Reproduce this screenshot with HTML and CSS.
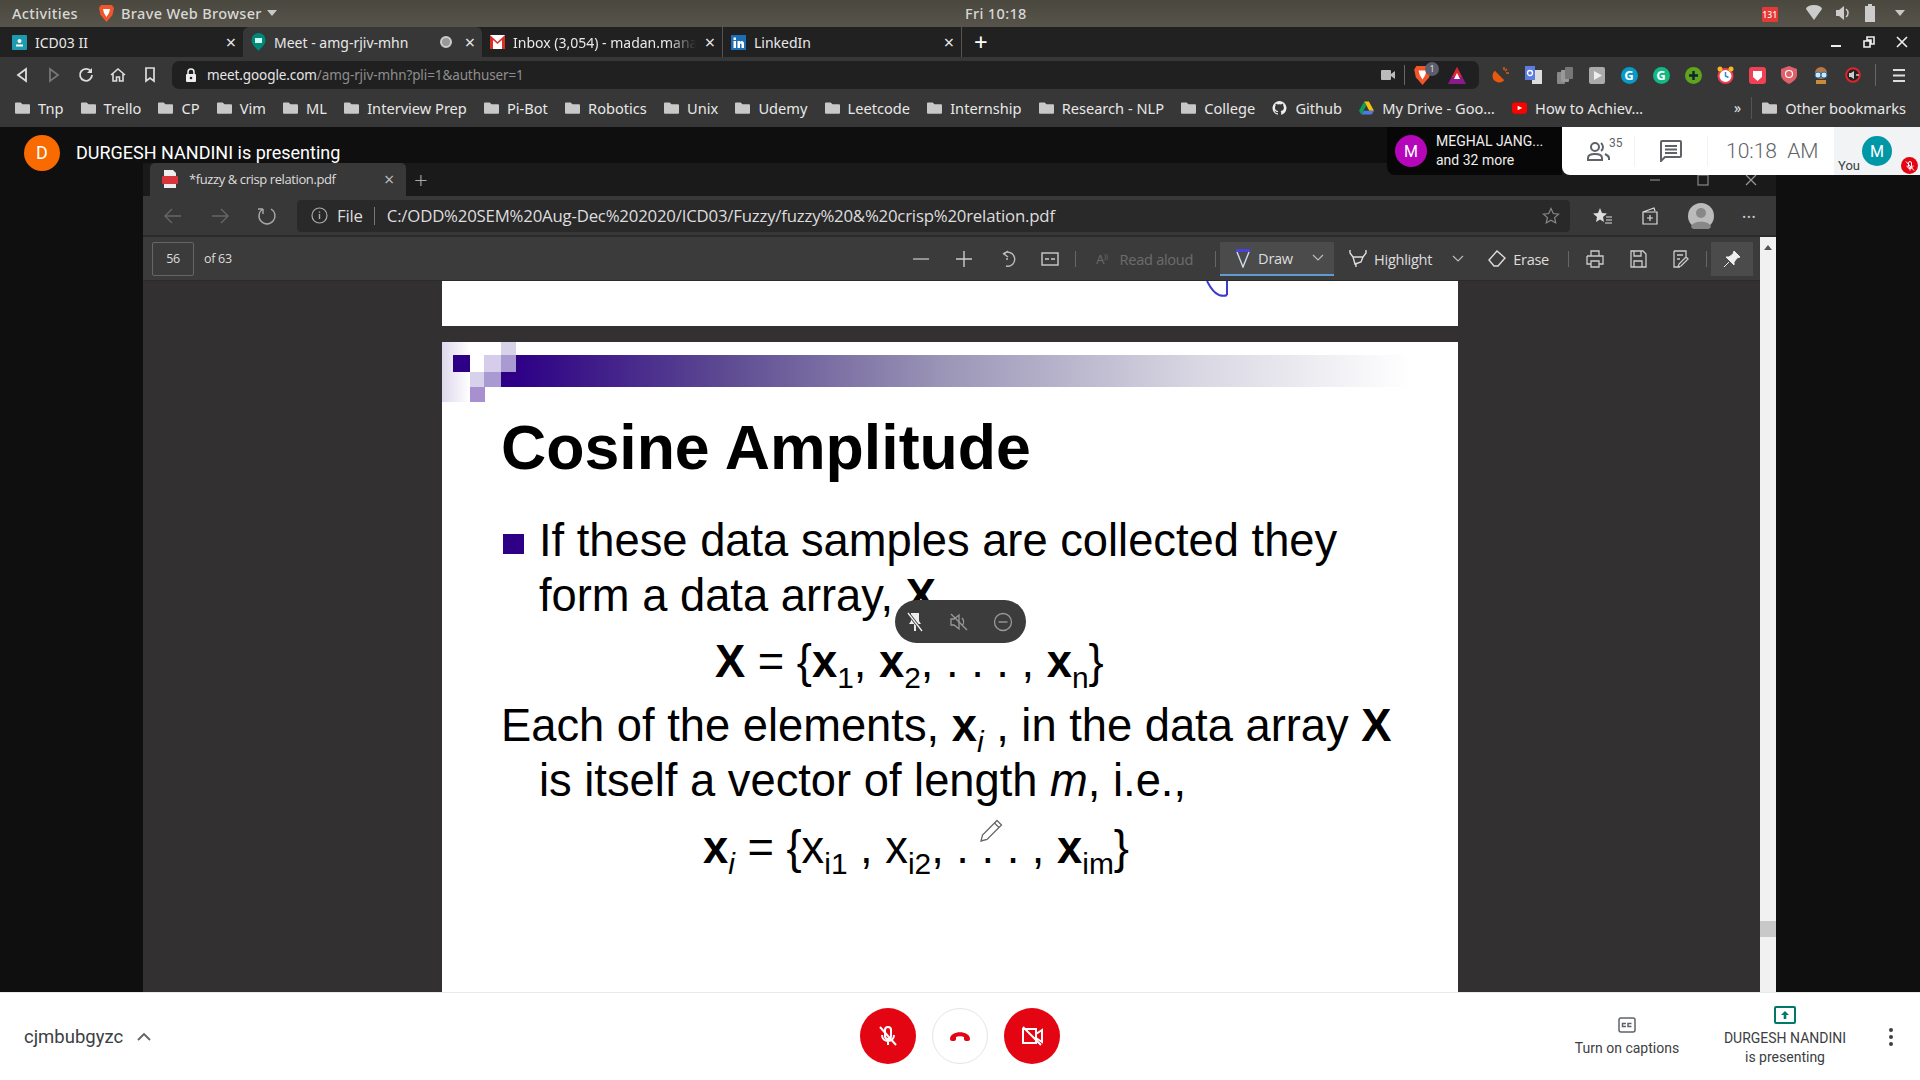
FILE: index.html
```html
<!DOCTYPE html>
<html lang="en">
<head>
  <meta charset="UTF-8">
  <title>Meet - amg-rjiv-mhn</title>
  <link rel="stylesheet" href="styles.css">
</head>
<body>

<svg class="defs" width="0" height="0">
  <symbol id="folder" viewBox="0 0 16 14"><path d="M0 2a1 1 0 0 1 1-1h5l2 2h7a1 1 0 0 1 1 1v8a1 1 0 0 1-1 1H1a1 1 0 0 1-1-1z" fill="#c8c8c8"/></symbol>
  <symbol id="mic-off" viewBox="0 0 24 24"><path d="M12 3a3 3 0 0 0-3 3v6a3 3 0 0 0 6 0V6a3 3 0 0 0-3-3zM6 11c0 4 3 6 6 6s6-2 6-6M12 17v4" fill="none" stroke="currentColor" stroke-width="2"/><path d="M4 3l16 18" stroke="currentColor" stroke-width="2"/></symbol>
</svg>

<!-- gnome top bar -->
<div class="topbar">
  <span class="activities">Activities</span>
  <svg class="brave-ic" width="15" height="18" viewBox="0 0 15 18"><path d="M2 1h11l2 3-1.500 7L7.500 18 1.500 11 0 4z" fill="#f1562b"/><path d="M4 5h7l-1 4-2.500 4L5 9z" fill="#fff"/></svg>
  <span class="app-name">Brave Web Browser</span>
  <span class="caret"></span>
  <span class="clock">Fri 10:18</span>
  <div class="tray">
    <span class="badge131">131</span>
    <svg width="16" height="16" viewBox="0 0 16 16"><path d="M0 4a8 4 0 0 1 16 0l-8 11z" fill="#ccc"/></svg>
    <svg width="14" height="16" viewBox="0 0 14 16"><path d="M0 5h3l5-4v14l-5-4H0z" fill="#ccc"/><path d="M10 4a5 5 0 0 1 0 8" fill="none" stroke="#ccc" stroke-width="1.500"/></svg>
    <svg width="12" height="18" viewBox="0 0 12 18"><path d="M1 2h3V0h4v2h3v16H1z" fill="#ccc"/></svg>
    <span class="caret"></span>
  </div>
</div>

<!-- browser tabs -->
<div class="tabstrip">
  <div class="tab">
    <svg width="15" height="15" viewBox="0 0 15 15"><rect width="15" height="15" rx="1" fill="#1e9ab0"/><circle cx="7.500" cy="6" r="2" fill="#fff"/><rect x="4" y="9.500" width="7" height="2" fill="#fff"/></svg>
    <span class="tab-title">ICD03 II</span><span class="tab-x">×</span>
  </div>
  <div class="tab active">
    <svg width="15" height="18" viewBox="0 0 15 18"><path d="M7.500 0a7 7 0 0 1 7 7c0 5-5 8-7 11-2-3-7-6-7-11a7 7 0 0 1 7-7z" fill="#00897b"/><rect x="4" y="5" width="7" height="5" fill="#cfe"/></svg>
    <span class="tab-title">Meet - amg-rjiv-mhn</span><span class="rec-dot"></span><span class="tab-x">×</span>
  </div>
  <div class="tab">
    <svg width="15" height="14" viewBox="0 0 15 14"><rect width="15" height="14" fill="#fff"/><path d="M0 0l7.500 7L15 0v14h-3V5L7.500 9 3 5v9H0z" fill="#d93025"/></svg>
    <span class="tab-title fade">Inbox (3,054) - madan.manas</span><span class="tab-x">×</span>
  </div>
  <div class="tab tab-sep">
    <svg width="15" height="15" viewBox="0 0 15 15"><rect width="15" height="15" fill="#1a6fb5"/><rect x="2.500" y="6" width="2.500" height="7" fill="#fff"/><rect x="2.500" y="2.500" width="2.500" height="2.500" fill="#fff"/><path d="M6.500 6H9v1c1.500-2 4-1 4 1.500V13h-2.500V9.500c0-1.500-1.500-1.500-1.500 0V13H6.500z" fill="#fff"/></svg>
    <span class="tab-title">LinkedIn</span><span class="tab-x">×</span>
  </div>
  <span class="new-tab">+</span>
  <div class="winbtns">
    <svg width="12" height="12" viewBox="0 0 12 12"><path d="M1 10h10" stroke="#eee" stroke-width="2"/></svg>
    <svg width="12" height="12" viewBox="0 0 12 12"><path d="M4 1h7v7H8V4H4zM1 5h6v6H1z" fill="none" stroke="#eee" stroke-width="1.600"/></svg>
    <svg width="12" height="12" viewBox="0 0 12 12"><path d="M1 1l10 10M11 1L1 11" stroke="#eee" stroke-width="1.600"/></svg>
  </div>
</div>

<!-- browser toolbar -->
<div class="toolbar">
  <div class="nav-btns">
    <svg width="12" height="16" viewBox="0 0 12 16"><path d="M10 2L2 8l8 6z" fill="none" stroke="#ddd" stroke-width="1.800"/></svg>
    <svg width="12" height="16" viewBox="0 0 12 16"><path d="M2 2l8 6-8 6z" fill="none" stroke="#777" stroke-width="1.800"/></svg>
    <svg width="16" height="16" viewBox="0 0 16 16"><path d="M13 4.500A6 6 0 1 0 14 8" fill="none" stroke="#ddd" stroke-width="1.800"/><path d="M14 1v5H9z" fill="#ddd"/></svg>
    <svg width="16" height="16" viewBox="0 0 16 16"><path d="M1 8l7-6 7 6M3 7v7h3.500v-4h3v4H13V7" fill="none" stroke="#ddd" stroke-width="1.600"/></svg>
    <svg width="12" height="16" viewBox="0 0 12 16"><path d="M2 1h8v13l-4-3-4 3z" fill="none" stroke="#ddd" stroke-width="1.700"/></svg>
  </div>
  <div class="omnibox">
    <svg class="lock" width="12" height="15" viewBox="0 0 12 15"><path d="M3 6V4a3 3 0 0 1 6 0v2" fill="none" stroke="#eee" stroke-width="1.500"/><rect x="1" y="6" width="10" height="8" rx="1" fill="#eee"/><circle cx="6" cy="10" r="1.300" fill="#222"/></svg>
    <span class="url"><b>meet.google.com</b>/amg-rjiv-mhn?pli=1&amp;authuser=1</span>
    <svg width="14" height="12" viewBox="0 0 14 12"><rect y="1" width="10" height="10" rx="1" fill="#bbb"/><path d="M10 5l4-3v8l-4-3z" fill="#bbb"/></svg>
    <span class="omni-sep"></span>
    <div class="brave-badge">
      <svg width="17" height="20" viewBox="0 0 15 18"><path d="M2 1h11l2 3-1.500 7L7.500 18 1.500 11 0 4z" fill="#f1562b"/><path d="M4 5h7l-1 4-2.500 4L5 9z" fill="#fff"/></svg>
      <span class="count">1</span>
    </div>
    <svg width="18" height="17" viewBox="0 0 18 17"><path d="M9 0l9 17H0z" fill="#8c1a8c"/><path d="M9 0l5 10H4z" fill="#e0242c"/><path d="M9 6l3 6H6z" fill="#fff"/></svg>
  </div>
  <div class="ext-row">
    <span class="ext"><svg width="18" height="18" viewBox="0 0 18 18"><path d="M3 7l7 7a5 5 0 0 1-7-7z" fill="#e8590c" stroke="#e8590c" stroke-width="3"/><path d="M12 1v3M15 3l-2 2M17 7h-3" stroke="#e8590c" stroke-width="1.500"/></svg></span>
    <span class="ext"><svg width="17" height="18" viewBox="0 0 17 18"><rect x="7" y="4" width="10" height="14" fill="#ddd"/><path d="M0 0h10v14H0z" fill="#5c7ce0"/><circle cx="5" cy="7" r="2.500" fill="none" stroke="#fff" stroke-width="1.300"/></svg></span>
    <span class="ext"><svg width="16" height="17" viewBox="0 0 16 17"><rect x="0" y="5" width="8" height="12" rx="1" fill="#888"/><rect x="4" y="3" width="8" height="12" rx="1" fill="#999"/><rect x="8" y="0" width="8" height="12" rx="1" fill="#777"/></svg></span>
    <span class="ext"><svg width="16" height="17" viewBox="0 0 16 17"><rect width="16" height="17" rx="2" fill="#aaa"/><path d="M5 4l8 4.500L5 13z" fill="#eee"/></svg></span>
    <span class="ext"><span class="ext-g blue">G</span></span>
    <span class="ext"><span class="ext-g green">G</span></span>
    <span class="ext"><svg width="17" height="17" viewBox="0 0 17 17"><circle cx="8.500" cy="8.500" r="8.500" fill="#5fa51c"/><path d="M8.500 4v9M4 8.500h9" stroke="#123" stroke-width="2.400"/></svg></span>
    <span class="ext"><svg width="17" height="18" viewBox="0 0 17 18"><circle cx="8.500" cy="10" r="7" fill="#fff" stroke="#ee3c4c" stroke-width="2"/><path d="M8.500 6v4l3 1.500" stroke="#2a8fc8" stroke-width="1.500" fill="none"/><circle cx="3" cy="3" r="2.500" fill="#f5b921"/><circle cx="14" cy="3" r="2.500" fill="#f5b921"/></svg></span>
    <span class="ext"><svg width="17" height="17" viewBox="0 0 17 17"><rect width="17" height="17" rx="3" fill="#ef4056"/><path d="M4 4h9v6l-4.500 4L4 10z" fill="#fff"/></svg></span>
    <span class="ext"><svg width="16" height="18" viewBox="0 0 16 18"><path d="M8 0l8 3v6c0 4-4 7-8 9-4-2-8-5-8-9V3z" fill="#e0606a"/><circle cx="8" cy="8" r="3.500" fill="none" stroke="#fff" stroke-width="1.200"/></svg></span>
    <span class="ext"><svg width="16" height="18" viewBox="0 0 16 18"><circle cx="8" cy="7" r="6" fill="#b8794a"/><circle cx="5" cy="9" r="3" fill="#cfe8f6" stroke="#2a6ea8"/><circle cx="11" cy="9" r="3" fill="#cfe8f6" stroke="#2a6ea8"/><path d="M3 14h10v4H3z" fill="#c98a3a"/></svg></span>
    <span class="ext"><svg width="16" height="16" viewBox="0 0 16 16"><circle cx="8" cy="8" r="6.800" fill="#222" stroke="#e0242c" stroke-width="2"/><path d="M4 6h2l3-2v8l-3-2H4z" fill="#ccc"/><path d="M11 8h3" stroke="#ccc" stroke-width="1.500"/></svg></span>
    <span class="ext-sep"></span>
    <svg class="menu-ic" width="12" height="13" viewBox="0 0 12 13"><path d="M0 1h12M0 6.500h12M0 12h12" stroke="#ddd" stroke-width="2"/></svg>
  </div>
</div>

<!-- bookmarks -->
<div class="bookmarks">
  <a class="bm"><svg class="fld"><use href="#folder"/></svg>Tnp</a>
  <a class="bm"><svg class="fld"><use href="#folder"/></svg>Trello</a>
  <a class="bm"><svg class="fld"><use href="#folder"/></svg>CP</a>
  <a class="bm"><svg class="fld"><use href="#folder"/></svg>Vim</a>
  <a class="bm"><svg class="fld"><use href="#folder"/></svg>ML</a>
  <a class="bm"><svg class="fld"><use href="#folder"/></svg>Interview Prep</a>
  <a class="bm"><svg class="fld"><use href="#folder"/></svg>Pi-Bot</a>
  <a class="bm"><svg class="fld"><use href="#folder"/></svg>Robotics</a>
  <a class="bm"><svg class="fld"><use href="#folder"/></svg>Unix</a>
  <a class="bm"><svg class="fld"><use href="#folder"/></svg>Udemy</a>
  <a class="bm"><svg class="fld"><use href="#folder"/></svg>Leetcode</a>
  <a class="bm"><svg class="fld"><use href="#folder"/></svg>Internship</a>
  <a class="bm"><svg class="fld"><use href="#folder"/></svg>Research - NLP</a>
  <a class="bm"><svg class="fld"><use href="#folder"/></svg>College</a>
  <a class="bm"><svg class="fld" viewBox="0 0 16 16"><path d="M8 0a8 8 0 0 0-2.500 15.600c.4.100.5-.2.500-.4v-1.400c-2.200.5-2.700-1-2.700-1-.4-.9-.9-1.200-.9-1.200-.7-.5.100-.5.100-.5.800.100 1.200.8 1.200.8.700 1.200 1.900.9 2.300.7.100-.5.300-.9.500-1.100-1.800-.2-3.700-.9-3.700-4 0-.9.300-1.600.8-2.100-.1-.2-.4-1 .1-2.100 0 0 .7-.2 2.200.8a7.500 7.500 0 0 1 4 0c1.500-1 2.200-.8 2.200-.8.400 1.100.2 1.900.1 2.100.5.600.8 1.300.8 2.100 0 3.100-1.900 3.800-3.700 4 .3.300.6.800.6 1.500v2.200c0 .2.100.5.600.4A8 8 0 0 0 8 0z" fill="#eee"/></svg>Github</a>
  <a class="bm"><svg class="fld" viewBox="0 0 16 14"><path d="M5.500 0h5L16 10h-5z" fill="#f4c20d"/><path d="M5.500 0L0 10l2.500 4L8 4z" fill="#109d58"/><path d="M2.500 14h11l2.500-4H5z" fill="#4c7be0"/></svg>My Drive - Goo…</a>
  <a class="bm"><svg class="fld" viewBox="0 0 16 14"><rect y="1" width="16" height="12" rx="3" fill="#f00"/><path d="M6 4.500l5 2.500-5 2.500z" fill="#fff"/></svg>How to Achiev…</a>
  <span class="bm-end">
    <span class="bm-more">»</span><span class="bm-sep"></span>
    <a class="bm"><svg class="fld"><use href="#folder"/></svg>Other bookmarks</a>
  </span>
</div>

<!-- meet stage -->
<div class="stage">
  <div class="presenter">
    <span class="avatar orange">D</span>
    <span>DURGESH NANDINI is presenting</span>
  </div>

  <div class="meet-top">
    <div class="others">
      <span class="avatar purple">M</span>
      <div class="others-text">MEGHAL JANG...<br>and 32 more</div>
    </div>
    <div class="meet-info">
      <div class="people">
        <svg width="24" height="22" viewBox="0 0 24 22"><circle cx="8" cy="7" r="4" fill="none" stroke="#5f6368" stroke-width="2"/><path d="M1 20v-2c0-3 4-4 7-4s7 1 7 4v2z" fill="none" stroke="#5f6368" stroke-width="2"/><path d="M14 3a5 5 0 0 1 0 8M18 14c2 1 4 2 4 4v2" fill="none" stroke="#5f6368" stroke-width="2"/></svg>
        <sup>35</sup>
      </div>
      <span class="info-sep"></span>
      <div class="chat">
        <svg width="22" height="22" viewBox="0 0 22 22"><path d="M2 1h18a1 1 0 0 1 1 1v14a1 1 0 0 1-1 1H5l-4 4V2a1 1 0 0 1 1-1z" fill="none" stroke="#5f6368" stroke-width="2"/><path d="M5 6h12M5 9.500h12M5 13h12" stroke="#5f6368" stroke-width="1.800"/></svg>
      </div>
      <span class="info-sep"></span>
      <div class="meet-clock">10:18&nbsp; AM</div>
    </div>
    <div class="self">
      <span class="you">You</span>
      <span class="avatar teal">M</span>
      <span class="self-mute"><svg width="12" height="12"><use href="#mic-off"/></svg></span>
    </div>
  </div>

  <div class="edge">
    <div class="edge-tabs">
      <div class="edge-tab">
        <svg width="16" height="18" viewBox="0 0 16 18"><path d="M2 0h9l3 3v15H2z" fill="#eee"/><rect y="6" width="16" height="8" rx="1" fill="#d8343c"/></svg>
        <span class="edge-tab-title">*fuzzy &amp; crisp relation.pdf</span>
        <span class="edge-tab-x">×</span>
      </div>
      <span class="edge-new">+</span>
      <div class="edge-win">
        <svg width="12" height="12" viewBox="0 0 12 12"><path d="M1 6h10" stroke="#888" stroke-width="1.200"/></svg>
        <svg width="12" height="12" viewBox="0 0 12 12"><rect x="1" y="1" width="10" height="10" fill="none" stroke="#888" stroke-width="1.200"/></svg>
        <svg width="12" height="12" viewBox="0 0 12 12"><path d="M1 1l10 10M11 1L1 11" stroke="#999" stroke-width="1.200"/></svg>
      </div>
    </div>
    <div class="edge-bar">
      <div class="edge-nav">
        <svg width="20" height="18" viewBox="0 0 20 18"><path d="M18 9H2M9 2L2 9l7 7" fill="none" stroke="#666" stroke-width="1.400"/></svg>
        <svg width="20" height="18" viewBox="0 0 20 18"><path d="M2 9h16M11 2l7 7-7 7" fill="none" stroke="#666" stroke-width="1.400"/></svg>
        <svg width="20" height="20" viewBox="0 0 20 20"><path d="M6 3a8 8 0 1 0 8 0" fill="none" stroke="#aaa" stroke-width="1.400"/><path d="M6 3v5M6 3H1" stroke="#aaa" stroke-width="1.400"/></svg>
      </div>
      <div class="edge-url">
        <svg width="17" height="17" viewBox="0 0 17 17"><circle cx="8.500" cy="8.500" r="7.500" fill="none" stroke="#aaa" stroke-width="1.200"/><path d="M8.500 7v5M8.500 4.500v1.200" stroke="#aaa" stroke-width="1.400"/></svg>
        <span class="edge-file">File</span>
        <span class="edge-url-sep"></span>
        <span class="edge-path">C:/ODD%20SEM%20Aug-Dec%202020/ICD03/Fuzzy/fuzzy%20&amp;%20crisp%20relation.pdf</span>
        <svg class="edge-star" width="18" height="18" viewBox="0 0 18 18"><path d="M9 1.500l2.300 5 5.200.6-3.900 3.500 1.100 5.300L9 13.200l-4.700 2.700 1.100-5.300L1.500 7.100l5.200-.6z" fill="none" stroke="#888" stroke-width="1.200"/></svg>
      </div>
      <div class="edge-tools">
        <svg width="20" height="18" viewBox="0 0 20 18"><path d="M8 1l2 5 5 .5-4 3.500 1 5-4-2.500L4 15l1-5-4-3.500L6 6z" fill="#ddd"/><path d="M14 10h6M14 13h6M13 16h7" stroke="#ddd"/></svg>
        <svg width="20" height="20" viewBox="0 0 20 20"><path d="M3 6l11-4 1 3M3 6h14v12H3z" fill="none" stroke="#ddd" stroke-width="1.200"/><path d="M10 9v6M7 12h6" stroke="#ddd" stroke-width="1.200"/></svg>
        <svg class="edge-profile" width="26" height="26" viewBox="0 0 26 26"><circle cx="13" cy="13" r="13" fill="#bbb"/><circle cx="13" cy="10" r="5" fill="#888"/><path d="M3 24c1-7 19-7 20 0a13 13 0 0 1-20 0z" fill="#888"/></svg>
        <span class="edge-dots">···</span>
      </div>
    </div>
    <div class="pdf-bar">
      <span class="pg-input">56</span>
      <span class="pg-total">of 63</span>
      <div class="pdf-tools">
        <svg class="pt" width="18" height="18" viewBox="0 0 18 18"><path d="M1 9h16" stroke="#bbb" stroke-width="1.400"/></svg>
        <svg class="pt" width="18" height="18" viewBox="0 0 18 18"><path d="M1 9h16M9 1v16" stroke="#ccc" stroke-width="1.400"/></svg>
        <svg class="pt" width="18" height="18" viewBox="0 0 18 18"><path d="M5 4a7 7 0 1 1 3 12" fill="none" stroke="#bbb" stroke-width="1.400"/><path d="M10 1L6 4l4 3" fill="none" stroke="#bbb" stroke-width="1.400"/><circle cx="9" cy="9" r="1" fill="#bbb"/></svg>
        <svg class="pt" width="18" height="16" viewBox="0 0 18 16"><rect x="1" y="2" width="16" height="12" fill="none" stroke="#ccc" stroke-width="1.400"/><path d="M4 8h4M10 8h4" stroke="#ccc" stroke-width="1.400"/></svg>
        <span class="pdf-sep"></span>
        <span class="pdf-btn dim"><small>A<sup>))</sup></small> Read aloud</span>
        <span class="pdf-sep"></span>
        <span class="pdf-btn draw">
          <svg width="16" height="20" viewBox="0 0 16 20"><path d="M1 1h14v3H1z" fill="#4a3fe0"/><path d="M2 4l6 15 6-15" fill="none" stroke="#cde" stroke-width="1.400"/></svg>
          Draw
          <svg class="chev" width="12" height="8" viewBox="0 0 12 8"><path d="M1 1l5 5 5-5" fill="none" stroke="#bbb" stroke-width="1.200"/></svg>
        </span>
        <span class="pdf-btn hl">
          <svg width="18" height="20" viewBox="0 0 18 20"><path d="M1 1v3l3 4h10l3-4V1M4 8l2 7 6-2 2-5M7 15v3" fill="none" stroke="#ddd" stroke-width="1.400"/></svg>
          Highlight
          <svg class="chev" width="12" height="8" viewBox="0 0 12 8"><path d="M1 1l5 5 5-5" fill="none" stroke="#bbb" stroke-width="1.200"/></svg>
        </span>
        <span class="pdf-btn erase">
          <svg width="18" height="17" viewBox="0 0 18 17"><path d="M1 10l8-9 8 7-7 8H6z" fill="none" stroke="#ddd" stroke-width="1.400"/></svg>
          Erase
        </span>
        <span class="pdf-sep"></span>
        <svg class="pt" width="18" height="18" viewBox="0 0 18 18"><path d="M5 6V1h8v5M1 6h16v8h-4M5 14H1V6M5 11h8v6H5z" fill="none" stroke="#ccc" stroke-width="1.300"/></svg>
        <svg class="pt" width="18" height="18" viewBox="0 0 18 18"><path d="M2 1h12l3 3v13H2zM5 1v5h7V1M5 17v-6h8v6" fill="none" stroke="#ccc" stroke-width="1.300"/></svg>
        <svg class="pt" width="18" height="18" viewBox="0 0 18 18"><path d="M2 1h12v6M2 1v16h6M5 5h6M5 9h3M16 9l-7 7-3 1 1-3 7-7z" fill="none" stroke="#ccc" stroke-width="1.300"/></svg>
        <span class="pdf-sep"></span>
        <span class="pin"><svg width="18" height="18" viewBox="0 0 18 18"><path d="M11 1l6 6-3 1-3 4 0 3-8-8 3 0 4-3zM6 12l-5 5" fill="#eee" stroke="#eee"/></svg></span>
      </div>
    </div>
    <div class="pdf-view">
      <div class="pages">
        <div class="page page-prev">
          <svg class="ink" width="26" height="17" viewBox="0 0 26 17"><path d="M3 0c3 6 7 12 12 14 3 1 6 1 8 0M23 0v14" fill="none" stroke="#3b3ad0" stroke-width="2"/></svg>
        </div>
        <div class="page page-main">
          <div class="banner">
            <svg class="squares" width="74" height="60" viewBox="0 0 74 60">
              <defs><linearGradient id="fade" x1="0" x2="1" y1="0" y2="0"><stop offset="0" stop-color="#ded8ec"/><stop offset="1" stop-color="#fff"/></linearGradient></defs>
              <rect width="28" height="60" fill="url(#fade)"/>
              <rect x="11" y="13" width="17" height="17" fill="#2d0086"/>
              <rect x="59" y="0" width="15" height="13" fill="#d8d2e8"/>
              <rect x="42" y="13" width="17" height="17" fill="#d6cdea"/>
              <rect x="59" y="13" width="15" height="17" fill="#a99ad2"/>
              <rect x="28" y="30" width="14" height="15" fill="#d8d1ea"/>
              <rect x="42" y="30" width="17" height="15" fill="#a99ad2"/>
              <rect x="59" y="30" width="15" height="15" fill="#2d0086"/>
              <rect x="28" y="45" width="15" height="15" fill="#a78fd0"/>
            </svg>
            <div class="band"></div>
          </div>
          <h1 class="s-title">Cosine Amplitude</h1>
          <div class="s-line bullet-line ind"><span class="bullet"></span>If these data samples are collected they</div>
          <div class="s-line ind">form a data array, <b>X</b>,</div>
          <div class="s-line f1"><b>X</b> = {<b>x</b><sub>1</sub>, <b>x</b><sub>2</sub>, . . . , <b>x</b><sub>n</sub>}</div>
          <div class="s-line each">Each of the elements, <b>x</b><sub><i>i</i></sub> , in the data array <b>X</b></div>
          <div class="s-line ind">is itself a vector of length <i>m</i>, i.e.,</div>
          <div class="s-line f2"><b>x</b><sub><i>i</i></sub> = {x<sub>i1</sub> , x<sub>i2</sub>, . . . , <b>x</b><sub>im</sub>}</div>
        </div>
      </div>
      <div class="scroll">
        <span class="scroll-up"></span>
        <span class="scroll-thumb"></span>
      </div>
    </div>
  </div>

  <div class="float-pill">
    <svg width="18" height="20" viewBox="0 0 18 20"><path d="M5 1h8v8l2 3H3l2-3zM8 12h2v7H8z" fill="#eee"/><path d="M2 1l14 18" stroke="#3c3c3c" stroke-width="3"/><path d="M2 1l14 18" stroke="#eee" stroke-width="1.300"/></svg>
    <svg width="20" height="20" viewBox="0 0 20 20"><path d="M2 7h3l5-4v14l-5-4H2z" fill="none" stroke="#999" stroke-width="1.300"/><path d="M13 6a6 6 0 0 1 0 8M2 2l16 16" fill="none" stroke="#999" stroke-width="1.300"/></svg>
    <svg width="20" height="20" viewBox="0 0 20 20"><circle cx="10" cy="10" r="8.500" fill="none" stroke="#999" stroke-width="1.300"/><path d="M5.500 10h9" stroke="#999" stroke-width="1.400"/></svg>
  </div>
  <svg class="pencil" width="23" height="23" viewBox="0 0 23 23"><path d="M17 1.500l4.500 4.500L7 20.500l-6 1.500 1.500-6z" fill="#fff" stroke="#666" stroke-width="1.300"/><path d="M14.500 4l4.500 4.500" stroke="#666" stroke-width="1.300"/></svg>
</div>

<!-- meet footer -->
<div class="footer">
  <div class="foot-left">
    <span>cjmbubgyzc</span>
    <svg width="14" height="9" viewBox="0 0 14 9"><path d="M1 8l6-6 6 6" fill="none" stroke="#5f6368" stroke-width="1.800"/></svg>
  </div>
  <div class="foot-mid">
    <span class="round red"><svg width="24" height="24"><use href="#mic-off"/></svg></span>
    <span class="round hang"><svg width="24" height="24" viewBox="0 0 24 24"><path d="M2 15c0-9 20-9 20 0 0 1-1 2-2 2h-2c-1 0-2-1-2-2v-2c-2-1-6-1-8 0v2c0 1-1 2-2 2H4c-1 0-2-1-2-2z" fill="#e30512"/></svg></span>
    <span class="round red"><svg width="24" height="24" viewBox="0 0 24 24"><path d="M3 5h13v14H3zM16 10l6-4v12l-6-4" fill="none" stroke="#fff" stroke-width="2"/><path d="M3 3l18 18" stroke="#fff" stroke-width="2"/></svg></span>
  </div>
  <div class="foot-right">
    <div class="captions">
      <svg width="18" height="16" viewBox="0 0 18 16"><rect x="1" y="1" width="16" height="14" rx="2" fill="none" stroke="#5f6368" stroke-width="1.500"/><path d="M8 6.500H4.500v3H8M13.500 6.500H10v3h3.500" fill="none" stroke="#5f6368" stroke-width="1.500"/></svg>
      <span>Turn on captions</span>
    </div>
    <div class="present-info">
      <svg width="22" height="18" viewBox="0 0 22 18"><rect x="1" y="1" width="20" height="16" rx="1" fill="none" stroke="#00796b" stroke-width="2"/><path d="M11 5l-4 4h2.700v4h2.600V9H15z" fill="#00796b"/></svg>
      <span>DURGESH NANDINI<br>is presenting</span>
    </div>
    <span class="dots"><i></i><i></i><i></i></span>
  </div>
</div>

</body>
</html>
```

FILE: styles.css
```css
* {
  box-sizing: border-box;
}

html, body {
  margin: 0;
  height: 100%;
  overflow: hidden;
}

body {
  display: flex;
  flex-direction: column;
  font-family: "Noto Sans", sans-serif;
  background-color: #0f0f0f;
}

.defs {
  position: absolute;
}

/* gnome bar */
.topbar {
  flex: 0 0 27px;
  display: flex;
  align-items: center;
  padding: 0 0 2px 12px;
  color: #d8d8d4;
  font-size: 14.5px;
  font-weight: 500;
  letter-spacing: 0.35px;
  background: linear-gradient(#4a473f, #57544b);
  position: relative;
}

.brave-ic {
  margin-left: 21px;
}

.app-name {
  margin-left: 7px;
}

.caret {
  display: inline-block;
  width: 0;
  height: 0;
  margin-left: 5px;
  border-left: 5px solid transparent;
  border-right: 5px solid transparent;
  border-top: 6px solid #c8c8c4;
}

.clock {
  position: absolute;
  left: 965px;
}

.tray {
  margin-left: auto;
  display: flex;
  align-items: center;
  gap: 14px;
  padding-right: 15px;
}

.badge131 {
  width: 16px;
  height: 15px;
  margin: 3px 14px 0 0;
  background-color: #e53935;
  color: #fff;
  font-size: 8px;
  line-height: 15px;
  text-align: center;
  border-radius: 1px;
}

/* tabs */
.tabstrip {
  flex: 0 0 30px;
  display: flex;
  align-items: center;
  background-color: #212121;
  color: #e8e8e8;
  font-size: 14px;
}

.tab {
  flex: 0 0 240px;
  min-width: 0;
  height: 30px;
  display: flex;
  align-items: center;
  gap: 8px;
  padding: 0 6px 0 8px;
}

.tab:first-child {
  flex-basis: 243px;
  padding-left: 12px;
}

.tab.active {
  flex-basis: 239px;
  background-color: #373737;
  border-radius: 6px 6px 0 0;
}

.tab-sep {
  border-left: 1px solid #555;
  border-right: 1px solid #555;
}

.tab-title {
  flex: 1;
  min-width: 0;
  white-space: nowrap;
  overflow: hidden;
}

.tab-title.fade {
  -webkit-mask-image: linear-gradient(90deg, #000 85%, transparent);
  mask-image: linear-gradient(90deg, #000 85%, transparent);
}

.tab-x {
  font-size: 18px;
  line-height: 1;
  width: 12px;
  text-align: center;
}

.rec-dot {
  width: 12px;
  height: 12px;
  border-radius: 50%;
  background-color: #999;
  border: 2px solid #ccc;
  margin-right: 4px;
}

.new-tab {
  margin-left: 12px;
  font-size: 24px;
  line-height: 1;
  color: #fff;
}

.winbtns {
  margin-left: auto;
  display: flex;
  gap: 21px;
  padding-right: 12px;
}

/* toolbar */
.toolbar {
  flex: 0 0 36px;
  display: flex;
  align-items: center;
  background-color: #373737;
}

.nav-btns {
  flex: 0 0 172px;
  display: grid;
  grid-template-columns: repeat(5, 32px);
  justify-items: center;
  align-items: center;
  padding-left: 6px;
}

.omnibox {
  flex: 0 0 1307px;
  height: 28px;
  display: flex;
  align-items: center;
  padding: 0 13px 0 13px;
  border-radius: 7px;
  background-color: #202020;
}

.lock {
  margin-right: 10px;
}

.url {
  flex: 1;
  font-size: 13.5px;
  letter-spacing: -0.1px;
  color: #8e8e8e;
}

.url b {
  font-weight: 400;
  color: #e6e6e6;
}

.omni-sep {
  width: 1px;
  height: 20px;
  margin: 0 9px;
  background-color: #666;
}

.brave-badge {
  position: relative;
  margin-right: 17px;
  height: 20px;
}

.count {
  position: absolute;
  left: 11px;
  top: -3px;
  width: 14px;
  height: 14px;
  border-radius: 50%;
  background-color: #5c5c6c;
  color: #ddd;
  font-size: 9px;
  line-height: 14px;
  text-align: center;
}

.ext-row {
  flex: 1;
  display: flex;
  align-items: center;
  padding-left: 6px;
}

.ext {
  flex: 0 0 32px;
  display: flex;
  justify-content: center;
  align-items: center;
}

.ext-g {
  width: 17px;
  height: 17px;
  border-radius: 50%;
  color: #fff;
  font-size: 13px;
  font-weight: 700;
  line-height: 17px;
  text-align: center;
}

.ext-g.blue {
  background-color: #0899c9;
}

.ext-g.green {
  background-color: #12b886;
}

.ext-sep {
  width: 1px;
  height: 22px;
  margin: 0 17px 0 6px;
  background-color: #666;
}

/* bookmarks */
.bookmarks {
  flex: 0 0 34px;
  display: flex;
  align-items: center;
  gap: 17.2px;
  padding: 0 0 5px 15px;
  background-color: #373737;
  color: #e8e8e8;
  font-size: 14.6px;
  white-space: nowrap;
}

.bm {
  display: flex;
  align-items: center;
  gap: 8px;
}

.fld {
  width: 15px;
  height: 14px;
}

.bm-end {
  margin-left: auto;
  display: flex;
  align-items: center;
  padding-right: 14px;
}

.bm-more {
  font-size: 14px;
}

.bm-sep {
  width: 1px;
  height: 22px;
  margin: 0 10px;
  background-color: #555;
}

/* stage */
.stage {
  flex: 1;
  position: relative;
  padding: 36px 144px 0 143px;
  min-height: 0;
  background-color: #0f0f0f;
}

.avatar {
  border-radius: 50%;
  display: flex;
  align-items: center;
  justify-content: center;
  color: #fff;
  flex: none;
}

.presenter {
  position: absolute;
  left: 24px;
  top: 8px;
  display: flex;
  align-items: center;
  gap: 16px;
  color: #fff;
  font-family: Roboto, sans-serif;
  font-size: 18px;
  line-height: 1;
  z-index: 2;
}

.orange {
  width: 36px;
  height: 36px;
  background-color: #f96a00;
  font-size: 18px;
}

.meet-top {
  position: absolute;
  top: 0;
  right: 0;
  display: flex;
  height: 48px;
  z-index: 3;
  font-family: Roboto, sans-serif;
}

.others {
  width: 175px;
  display: flex;
  align-items: center;
  gap: 9px;
  padding-left: 8px;
  background-color: #070707;
  border-radius: 0 0 0 8px;
  color: #eee;
  font-size: 14px;
  line-height: 19px;
}

.purple {
  width: 32px;
  height: 32px;
  background-color: #b506b9;
  font-size: 16px;
}

.meet-info {
  width: 272px;
  display: flex;
  align-items: center;
  background-color: #fff;
  border-radius: 0 0 0 8px;
  color: #5f6368;
}

.people {
  display: flex;
  align-items: flex-start;
  margin-left: 25px;
  width: 47px;
}

.people sup {
  font-size: 12px;
  line-height: 1;
  margin-left: -2px;
  margin-top: -3px;
}

.info-sep {
  width: 1px;
  height: 30px;
  background-color: #f1f3f4;
}

.chat {
  width: 72px;
  display: flex;
  justify-content: center;
}

.meet-clock {
  margin-left: 18px;
  font-size: 21px;
  font-weight: 300;
  white-space: nowrap;
}

.self {
  width: 86px;
  position: relative;
  background-color: #f1f3f4;
}

.you {
  position: absolute;
  left: 4px;
  top: 31px;
  font-size: 13px;
  color: #3c4043;
}

.teal {
  position: absolute;
  left: 28px;
  top: 9px;
  width: 30px;
  height: 30px;
  background-color: #0097a7;
  font-size: 16px;
}

.self-mute {
  position: absolute;
  left: 67px;
  top: 30px;
  width: 17px;
  height: 17px;
  border-radius: 50%;
  background-color: #e30512;
  color: #fff;
  display: flex;
  align-items: center;
  justify-content: center;
}

/* edge window */
.edge {
  height: 829px;
  display: flex;
  flex-direction: column;
  font-family: "Open Sans", sans-serif;
  color: #ddd;
}

.edge-tabs {
  flex: 0 0 33px;
  display: flex;
  align-items: center;
  background-color: #1b1a1b;
}

.edge-tab {
  width: 256px;
  height: 33px;
  margin-left: 7px;
  display: flex;
  align-items: center;
  gap: 11px;
  padding: 0 12px 2px;
  background-color: #393839;
  border-radius: 5px 5px 0 0;
  font-size: 13px;
  letter-spacing: -0.4px;
}

.edge-tab-title {
  flex: 1;
}

.edge-tab-x {
  font-size: 18px;
  color: #bbb;
  line-height: 1;
}

.edge-new {
  margin-left: 8px;
  font-size: 24px;
  line-height: 1;
  font-weight: 300;
  color: #aaa;
}

.edge-win {
  margin-left: auto;
  display: flex;
  gap: 36px;
  padding-right: 19px;
}

.edge-bar {
  flex: 0 0 41px;
  display: flex;
  align-items: center;
  background-color: #393839;
  border-bottom: 2px solid #2c2b2c;
}

.edge-nav {
  flex: 0 0 154px;
  display: flex;
  align-items: center;
  gap: 27px;
  padding-left: 20px;
}

.edge-url {
  flex: 0 0 1273px;
  height: 32px;
  display: flex;
  align-items: center;
  padding-left: 14px;
  background-color: #2a292a;
  border-radius: 4px;
  font-size: 16.8px;
  letter-spacing: -0.2px;
}

.edge-file {
  margin-left: 9px;
}

.edge-url-sep {
  width: 1px;
  height: 18px;
  margin: 0 12px 0 11px;
  background-color: #777;
}

.edge-path {
  flex: 1;
  white-space: nowrap;
}

.edge-star {
  margin-right: 10px;
}

.edge-tools {
  flex: 1;
  display: flex;
  align-items: center;
  justify-content: space-between;
  padding: 0 20px 0 22px;
}

.edge-dots {
  font-size: 18px;
  color: #ccc;
}

.pdf-bar {
  flex: 0 0 44px;
  display: flex;
  align-items: center;
  padding-left: 9px;
  background-color: #3c3b3c;
  border-bottom: 1px solid #2c2b2c;
  font-size: 14.6px;
  letter-spacing: -0.3px;
}

.pg-input {
  width: 42px;
  height: 34px;
  line-height: 32px;
  text-align: center;
  font-size: 12.5px;
  border: 1px solid #666;
  border-radius: 2px;
}

.pg-total {
  margin-left: 10px;
  font-size: 12.5px;
}

.pdf-tools {
  margin-left: auto;
  display: flex;
  align-items: center;
  height: 34px;
  padding-right: 23px;
}

.pt {
  margin: 0 12.5px;
}

.pdf-sep {
  width: 1px;
  height: 16px;
  margin: 0 4px;
  background-color: #666;
}

.pdf-btn {
  display: flex;
  align-items: center;
  gap: 7px;
  height: 34px;
  white-space: nowrap;
}

.pdf-btn.dim {
  gap: 12px;
  padding: 0 18px 0 16px;
  color: #6c6c6c;
}

.pdf-btn small {
  font-size: 13px;
}

.pdf-btn sup {
  font-size: 7px;
}

.pdf-btn.draw {
  width: 114px;
  padding-left: 15px;
  background-color: #4c4b4c;
  border-bottom: 2px solid #5d9bd0;
}

.pdf-btn.draw .chev {
  margin-left: 12px;
}

.pdf-btn.hl {
  padding-left: 15px;
}

.pdf-btn.hl .chev {
  margin-left: 13px;
}

.pdf-btn.erase {
  padding: 0 15px 0 24px;
}

.pin {
  width: 42px;
  height: 34px;
  display: flex;
  align-items: center;
  justify-content: center;
  background-color: #4c4b4c;
}

.pdf-view {
  flex: 1;
  display: flex;
  min-height: 0;
  background-color: #323031;
}

.pages {
  flex: 1;
  display: flex;
  flex-direction: column;
  padding-left: 299px;
  overflow: hidden;
}

.page {
  position: relative;
  width: 1016px;
  background-color: #fff;
  color: #000;
  font-family: "Liberation Sans", sans-serif;
}

.page-prev {
  flex: 0 0 45px;
  margin-bottom: 16px;
}

.page-main {
  flex: 1;
}

.ink {
  position: absolute;
  left: 762px;
  top: 0;
}

.banner {
  display: flex;
  height: 60px;
}

.squares {
  flex: none;
}

.band {
  flex: 1;
  height: 32px;
  margin-top: 13px;
  background: linear-gradient(90deg, #2d0086 0%, #3a1488 6%, #5d4a92 22%, #9a94b6 45%, #d8d6e2 72%, #fff 95%);
}

.s-title {
  margin: 10px 0 0 59px;
  font-size: 62.6px;
  line-height: 70px;
  font-weight: 700;
}

.s-line {
  font-size: 45.3px;
  line-height: 55px;
  white-space: nowrap;
}

.s-line sub {
  font-size: 0.66em;
  line-height: 0;
  vertical-align: -0.36em;
}

.ind {
  padding-left: 97px;
}

.bullet-line {
  position: relative;
  margin-top: 31px;
}

.bullet {
  position: absolute;
  left: 61px;
  top: 21px;
  width: 21px;
  height: 20px;
  background-color: #2d0086;
}

.f1 {
  padding-left: 273px;
  margin-top: 11px;
}

.each {
  padding-left: 59px;
  margin-top: 9px;
}

.f2 {
  padding-left: 261px;
  margin-top: 12px;
}

.scroll {
  flex: 0 0 16px;
  position: relative;
  background-color: #f1f1f1;
  margin-top: -44px;
}

.scroll-up {
  position: absolute;
  left: 4px;
  top: 8px;
  border-left: 4px solid transparent;
  border-right: 4px solid transparent;
  border-bottom: 5px solid #555;
}

.scroll-thumb {
  position: absolute;
  left: 0;
  top: 684px;
  width: 16px;
  height: 16px;
  background-color: #c8c8c8;
}

.float-pill {
  position: absolute;
  left: 895px;
  top: 473px;
  width: 131px;
  height: 43px;
  display: flex;
  align-items: center;
  justify-content: space-between;
  padding: 0 13px 0 11px;
  border-radius: 22px;
  background-color: #3c3c3c;
}

.pencil {
  position: absolute;
  left: 980px;
  top: 692px;
}

/* footer */
.footer {
  flex: 0 0 88px;
  display: flex;
  align-items: center;
  position: relative;
  background-color: #fff;
  border-top: 1px solid #e8e8e8;
  color: #3c4043;
  font-family: Roboto, sans-serif;
}

.foot-left {
  display: flex;
  align-items: center;
  gap: 14px;
  padding-left: 24px;
  font-size: 18.5px;
}

.foot-mid {
  position: absolute;
  left: 860px;
  top: 15px;
  display: flex;
  gap: 16px;
}

.round {
  width: 56px;
  height: 56px;
  border-radius: 50%;
  display: flex;
  align-items: center;
  justify-content: center;
}

.round.red {
  background-color: #e30512;
  color: #fff;
}

.round.hang {
  border: 1px solid #e4e4e4;
}

.foot-right {
  margin-left: auto;
  display: flex;
  align-items: center;
  font-size: 14px;
  line-height: 19px;
  text-align: center;
}

.captions {
  width: 104px;
  display: flex;
  flex-direction: column;
  align-items: center;
  gap: 6px;
  padding-top: 1px;
  white-space: nowrap;
}

.present-info {
  margin-left: 47px;
  width: 118px;
  display: flex;
  flex-direction: column;
  align-items: center;
  gap: 5px;
  white-space: nowrap;
}

.dots {
  display: flex;
  flex-direction: column;
  gap: 3px;
  margin: 0 27px 0 45px;
}

.dots i {
  width: 4px;
  height: 4px;
  border-radius: 50%;
  background-color: #3c4043;
}
```
